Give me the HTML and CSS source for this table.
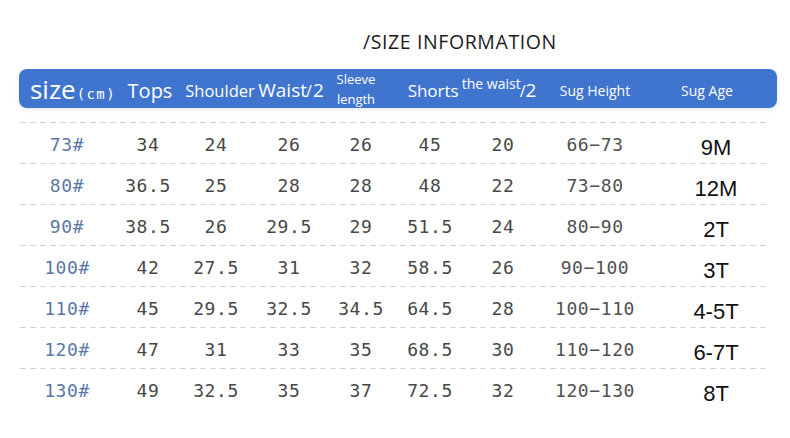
FILE: index.html
```html
<!DOCTYPE html>
<html>
<head>
<meta charset="utf-8">
<link rel="stylesheet" href="styles.css">
</head>
<body>
<div class="page">
  <h1 class="title">/SIZE INFORMATION</h1>
  <div class="bar">
    <div class="h h-size"><span class="big">size</span><span class="cm">(cm)</span></div>
    <div class="h h-tops">Tops</div>
    <div class="h h-shoulder">Shoulder</div>
    <div class="h h-waist"><span>Waist<span class="slash">/</span>2</span></div>
    <div class="h h-sleeve"><span>Sleeve</span><span>length</span></div>
    <div class="h h-shorts"><span>Shorts<sup class="sup">the waist</sup><span class="slash">/</span><span class="two">2</span></span></div>
    <div class="h h-height">Sug Height</div>
    <div class="h h-age">Sug Age</div>
  </div>
  <div class="rows">
    <div class="row"><span class="size">73#</span><span>34</span><span>24</span><span>26</span><span>26</span><span>45</span><span>20</span><span class="ht">66−73</span><span class="age">9M</span></div>
    <div class="row"><span class="size">80#</span><span>36.5</span><span>25</span><span>28</span><span>28</span><span>48</span><span>22</span><span class="ht">73−80</span><span class="age">12M</span></div>
    <div class="row"><span class="size">90#</span><span>38.5</span><span>26</span><span>29.5</span><span>29</span><span>51.5</span><span>24</span><span class="ht">80−90</span><span class="age">2T</span></div>
    <div class="row"><span class="size">100#</span><span>42</span><span>27.5</span><span>31</span><span>32</span><span>58.5</span><span>26</span><span class="ht">90−100</span><span class="age">3T</span></div>
    <div class="row"><span class="size">110#</span><span>45</span><span>29.5</span><span>32.5</span><span>34.5</span><span>64.5</span><span>28</span><span class="ht">100−110</span><span class="age">4-5T</span></div>
    <div class="row"><span class="size">120#</span><span>47</span><span>31</span><span>33</span><span>35</span><span>68.5</span><span>30</span><span class="ht">110−120</span><span class="age">6-7T</span></div>
    <div class="row"><span class="size">130#</span><span>49</span><span>32.5</span><span>35</span><span>37</span><span>72.5</span><span>32</span><span class="ht">120−130</span><span class="age">8T</span></div>
  </div>
</div>
</body>
</html>
```
FILE: styles.css
```css
* { box-sizing: border-box; }
html, body { margin: 0; padding: 0; background: #fff; }
body { width: 790px; height: 438px; overflow: hidden; }

.page { padding-top: 28px; }

.title {
  margin: 0 0 0 363px;
  font-family: "Open Sans", sans-serif;
  font-weight: 400;
  font-size: 19.5px;
  letter-spacing: 0.6px;
  line-height: 28px;
  color: #1b1b1b;
}

.bar {
  margin: 13px 0 0 19px;
  width: 758px;
  height: 39px;
  padding-top: 3px;
  background: #3f74cf;
  border-radius: 8px;
  box-shadow: 0 2px 4px rgba(40, 70, 130, 0.12);
  display: flex;
  align-items: center;
  color: #fff;
  font-family: "Open Sans", sans-serif;
}

.h {
  display: flex;
  justify-content: center;
  align-items: center;
  white-space: nowrap;
  height: 100%;
}
.h-size { width: 108px; align-items: baseline; padding-top: 2px; }
.h-size .big { font-size: 26px; line-height: 30px; }
.h-size .cm { font-family: "DejaVu Sans Mono", monospace; font-size: 14px; letter-spacing: 1.4px; margin-left: 1px; }
.h-tops { width: 46px; font-size: 20px; }
.h-shoulder { width: 94px; font-size: 16.5px; }
.h-waist { width: 48px; font-size: 19px; }
.h-waist .slash { font-size: 16px; margin: 0 1px 0 -1px; }
.h-sleeve { width: 86px; flex-direction: column; font-size: 13px; line-height: 20px; padding-right: 4px; margin-top: -3px; }
.h-shorts { width: 138px; font-size: 17px; padding-left: 4px; }
.h-shorts .sup { font-size: 14px; vertical-align: 8px; line-height: 0; margin-left: 3px; }
.h-shorts .slash { font-size: 16px; margin-left: -1px; }
.h-shorts .two { font-size: 19px; }
.h-height { width: 112px; font-size: 14px; }
.h-age { width: 112px; font-size: 14px; }

.rows {
  margin: 14px 0 0 20px;
  width: 747px;
}
.row {
  display: grid;
  grid-template-columns: 94px 68px 68px 78px 66px 72px 74px 110px 1fr;
  align-items: center;
  height: 41px;
  padding-top: 3px;
  background-image: repeating-linear-gradient(to right, #d4d4d4 0 6px, transparent 6px 10px);
  background-size: 100% 1px;
  background-repeat: no-repeat;
  background-position: 0 0;
  font-family: "DejaVu Sans Mono", monospace;
  font-size: 18px;
  letter-spacing: 0.6px;
  color: #474747;
}
.row > span { text-align: center; white-space: nowrap; }
.row .size { color: #5a77a8; }
.row .ht { color: #505050; }
.row .age {
  font-family: "Liberation Sans", Arial, sans-serif;
  font-size: 22px;
  letter-spacing: 0;
  color: #111;
  padding-left: 15px;
  padding-top: 8px;
}
```
